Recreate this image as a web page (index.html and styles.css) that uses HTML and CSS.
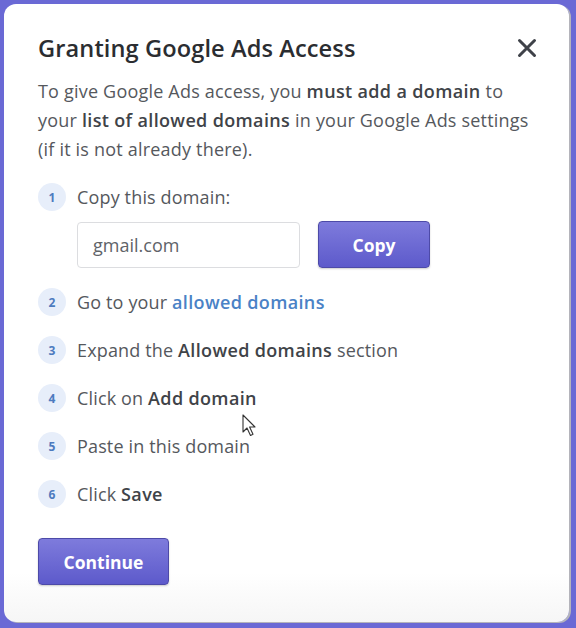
FILE: index.html
```html
<!DOCTYPE html>
<html>
<head>
<meta charset="utf-8">
<link rel="stylesheet" href="styles.css">
</head>
<body>
<div class="card">
  <div class="header">
    <h1 class="title">Granting Google Ads Access</h1>
    <button class="close" aria-label="Close">
      <svg width="20" height="20" viewBox="0 0 20 20"><path d="M2.5 2.5 L17.5 17.5 M17.5 2.5 L2.5 17.5" stroke="#3f4249" stroke-width="3" stroke-linecap="round"/></svg>
    </button>
  </div>
  <p class="intro">To give Google Ads access, you <b>must add a domain</b> to<br>your <b>list of allowed domains</b> in your Google Ads settings<br>(if it is not already there).</p>
  <ol class="steps">
    <li class="step"><span class="num">1</span><span>Copy this domain:</span></li>
    <li class="copy-row">
      <div class="field">gmail.com</div>
      <button class="btn btn-copy">Copy</button>
    </li>
    <li class="step"><span class="num">2</span><span>Go to your <a class="link">allowed domains</a></span></li>
    <li class="step"><span class="num">3</span><span>Expand the <b>Allowed domains</b> section</span></li>
    <li class="step"><span class="num">4</span><span>Click on <b>Add domain</b></span></li>
    <li class="step"><span class="num">5</span><span>Paste in this domain</span></li>
    <li class="step"><span class="num">6</span><span>Click <b>Save</b></span></li>
  </ol>
  <button class="btn btn-continue">Continue</button>
  <svg class="cursor" width="16" height="24" viewBox="0 0 16 24"><path d="M1 1 L1 18 L5 14 L8.5 21.5 L11 20.3 L7.6 13 L13 13 Z" fill="#fff" stroke="#333" stroke-width="1.1" stroke-linejoin="round"/></svg>
</div>
</body>
</html>
```
FILE: styles.css
```css
* { box-sizing: border-box; }
html, body { margin: 0; padding: 0; }
body {
  background: #6a69d5;
  width: 576px;
  height: 628px;
  overflow: hidden;
  font-family: "Open Sans", "Lato", sans-serif;
  color: #4f5257;
}
.card {
  position: relative;
  margin: 4px 0 0 4px;
  width: 565px;
  height: 618px;
  background: linear-gradient(to bottom, #ffffff 0%, #ffffff 92%, #f6f6f6 100%);
  border-radius: 12px;
  box-shadow: 2px 1px 0 #b4b4bb;
  padding: 29px 30px 0 34px;
}
.header {
  display: flex;
  align-items: center;
  justify-content: space-between;
  height: 30px;
}
.title {
  margin: 0;
  font-size: 23.6px;
  font-weight: 600;
  letter-spacing: 0.1px;
  color: #2b2d31;
  line-height: 30px;
  white-space: nowrap;
}
.close {
  border: 0;
  background: none;
  padding: 0;
  margin-right: 2px;
  width: 20px;
  height: 20px;
  display: flex;
}
.intro {
  margin: 14px 0 0;
  font-size: 18px;
  letter-spacing: 0.2px;
  line-height: 29px;
  color: #55585d;
  white-space: nowrap;
}
.intro b { color: #404348; font-weight: 600; letter-spacing: 0.35px; }
.steps {
  list-style: none;
  margin: 19px 0 0;
  padding: 0;
  display: flex;
  flex-direction: column;
  gap: 20px;
}
.step {
  display: flex;
  align-items: center;
  gap: 11px;
  height: 28px;
  font-size: 18px;
  letter-spacing: 0.15px;
  color: #55585d;
  white-space: nowrap;
}
.step b { color: #404348; font-weight: 600; letter-spacing: 0.35px; }
.num {
  width: 28px;
  height: 28px;
  border-radius: 50%;
  background: #e7eefa;
  color: #4d7bbf;
  font-size: 12px;
  font-weight: 700;
  letter-spacing: 0;
  display: flex;
  align-items: center;
  justify-content: center;
  flex: none;
}
.link { color: #4a82c6; font-weight: 600; letter-spacing: 0.35px; }
.copy-row {
  display: flex;
  align-items: center;
  gap: 18px;
  margin: -10px 0 0 39px;
}
.field {
  width: 223px;
  height: 46px;
  border: 1px solid #dcdde0;
  border-radius: 4px;
  padding: 0 15px;
  display: flex;
  align-items: center;
  font-size: 18px;
  color: #606368;
}
.btn {
  font-family: inherit;
  color: #fff;
  font-weight: 700;
  font-size: 17.5px;
  border: 1px solid #4d4aa8;
  border-radius: 4px;
  background: linear-gradient(to bottom, #7e7bdc 0%, #5d5acb 100%);
  box-shadow: 0 1px 2px rgba(0,0,0,0.2);
  cursor: pointer;
}
.btn-copy {
  width: 112px;
  height: 47px;
}
.btn-continue {
  margin-top: 30px;
  width: 131px;
  height: 47px;
}
.cursor {
  position: absolute;
  left: 238px;
  top: 410px;
}
```
